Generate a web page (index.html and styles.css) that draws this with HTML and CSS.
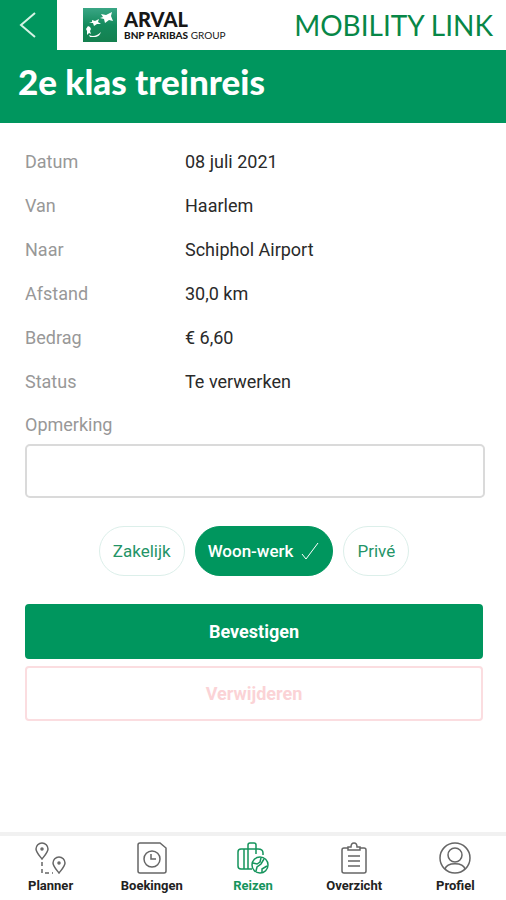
FILE: index.html
```html
<!DOCTYPE html>
<html lang="nl">
<head>
<meta charset="utf-8">
<meta name="viewport" content="width=device-width, initial-scale=1">
<title>Mobility Link</title>
<link rel="stylesheet" href="styles.css">
</head>
<body>
<header class="topbar">
  <button class="back" type="button" aria-label="Terug">
    <svg width="18" height="26" viewBox="0 0 18 26"><path d="M16 1 2 13l14 12"/></svg>
  </button>
  <div class="brand">
    <svg class="brand-mark" width="34" height="34" viewBox="0 0 34 34">
      <defs><linearGradient id="mark" x1="0" y1="0" x2="0" y2="1"><stop offset="0" stop-color="#3aa685"/><stop offset="0.5" stop-color="#148a5c"/><stop offset="1" stop-color="#14804f"/></linearGradient></defs>
      <rect width="34" height="34" fill="url(#mark)"/>
      <path fill="#fff" d="M18 6l5 1 6-3-1 4 2 5-4-1-4 3-1-4-4-1 3-1zM9 12l3 1 4-2-1 3 3 2-4 0-3 2-1-3-4 0 3-1zM5 18l2 1 1 2-1 2 1 3-2-1-2 2 0-4-1-2zM6 27c4 2 8 1 12-3-1 3-3 5-7 5l-4 0z"/>
    </svg>
    <div class="brand-text"><span class="brand-name">ARVAL</span><span class="brand-group"><b>BNP PARIBAS</b> GROUP</span></div>
  </div>
  <div class="product">MOBILITY LINK</div>
</header>
<h1 class="title">2e klas treinreis</h1>
<main class="content">
  <dl class="details">
    <dt>Datum</dt><dd>08 juli 2021</dd>
    <dt>Van</dt><dd>Haarlem</dd>
    <dt>Naar</dt><dd>Schiphol Airport</dd>
    <dt>Afstand</dt><dd>30,0 km</dd>
    <dt>Bedrag</dt><dd>€ 6,60</dd>
    <dt>Status</dt><dd>Te verwerken</dd>
  </dl>
  <label class="remark-label" for="remark">Opmerking</label>
  <input class="remark" id="remark" type="text">
  <div class="types">
    <button class="chip" type="button">Zakelijk</button>
    <button class="chip chip-active" type="button" aria-pressed="true">Woon-werk
      <svg width="20" height="20" viewBox="0 0 20 20"><path d="M2 13l4 5L18 2"/></svg>
    </button>
    <button class="chip" type="button">Privé</button>
  </div>
  <div class="actions">
    <button class="action confirm" type="button">Bevestigen</button>
    <button class="action remove" type="button">Verwijderen</button>
  </div>
</main>
<nav class="tabs">
  <a class="tab" href="#planner">
    <svg width="34" height="34" viewBox="0 0 34 34"><path d="M8 18C4 13 2 11 2 8a6 6 0 0 1 12 0c0 3-2 5-6 10zM25 32c-4-5-6-7-6-10a6 6 0 0 1 12 0c0 3-2 5-6 10z"/><circle cx="8" cy="8" r="1"/><circle cx="25" cy="22" r="1"/><path stroke-dasharray="4 3" d="M8 21v11h11"/></svg>
    <span>Planner</span></a>
  <a class="tab" href="#boekingen">
    <svg width="34" height="34" viewBox="0 0 34 34"><path d="M5 2h20l6 5v23q0 2-2 2H5q-2 0-2-2V4q0-2 2-2z"/><circle cx="17" cy="18" r="8"/><path d="M16 13v5h5"/></svg>
    <span>Boekingen</span></a>
  <a class="tab tab-active" href="#reizen" aria-current="page">
    <svg width="34" height="34" viewBox="0 0 34 34"><path d="M16 28H5q-3 0-3-3V11q0-3 3-3h17q5 0 5 4v2M8 8v20M12 28V4q0-2 2-2h4q2 0 2 2v4M20 8v5"/><circle cx="24" cy="24" r="8"/><path d="M17 22l4 1 3-2 1-4M20 30l1-4 4-3 3-5M26 31v-3l5-3"/></svg>
    <span>Reizen</span></a>
  <a class="tab" href="#overzicht">
    <svg width="34" height="34" viewBox="0 0 34 34"><path d="M11 7H7q-2 0-2 2v21q0 2 2 2h20q2 0 2-2V9q0-2-2-2h-4M11 9V6h3q0-4 3-4t3 4h3v3zM11 15h12M11 20h12M11 25h12"/></svg>
    <span>Overzicht</span></a>
  <a class="tab" href="#profiel">
    <svg width="34" height="34" viewBox="0 0 34 34"><circle cx="17" cy="17" r="15"/><circle cx="17" cy="14" r="7"/><path d="M7 28c2-7 18-7 20 0"/></svg>
    <span>Profiel</span></a>
</nav>
</body>
</html>
```
FILE: styles.css
```css
* { box-sizing: border-box; }
body {
  margin: 0;
  min-height: 100vh;
  display: flex;
  flex-direction: column;
  background: #fff;
  color: #2a2a2a;
  font: 18px/24px Roboto, "Liberation Sans", sans-serif;
}
button, input { font: inherit; }
svg { fill: none; stroke: currentColor; }
.topbar { display: flex; height: 50px; align-items: center; }
.back {
  width: 57px;
  height: 50px;
  padding: 0 2px 0 0;
  border: 0;
  display: grid;
  place-items: center;
  background: #00965e;
  color: #d5f3e5;
  stroke-width: 2;
}
.brand { display: flex; align-items: center; gap: 7px; margin-left: 26px; }
.brand-mark { stroke: none; }
.brand-text { display: flex; flex-direction: column; color: #171717; }
.brand-name { font: 900 20px/20px Lato, sans-serif; }
.brand-group { font: 10px/12px Lato, sans-serif; white-space: nowrap; }
.brand-group b { font-weight: 900; }
.product {
  margin-left: auto;
  padding-right: 13px;
  color: #078747;
  font: 28px/46px Lato, sans-serif;
  white-space: nowrap;
}
.title {
  margin: 0;
  padding: 11px 18px 22px;
  background: #00965e;
  color: #fff;
  font: 900 35px/40px Lato, sans-serif;
}
.content { flex: 1; padding: 27px 21px 0 25px; }
.details {
  margin: 0;
  display: grid;
  grid-template-columns: 160px 1fr;
  row-gap: 20px;
}
dt, .remark-label { color: #989898; }
dd { margin: 0; }
.remark-label { display: block; margin: 19px 0 7px; }
.remark {
  display: block;
  width: 100%;
  height: 54px;
  padding: 0 16px;
  border: 2px solid #dadada;
  border-radius: 5px;
  background: #fff;
}
.types { display: flex; justify-content: center; gap: 10px; margin: 28px 0; padding-right: 2px; }
.chip {
  display: flex;
  align-items: center;
  gap: 7px;
  height: 50px;
  padding: 0 13px;
  border: 1px solid #dcefea;
  border-radius: 25px;
  background: #fff;
  color: #249467;
  font-size: 17px;
}
.chip-active { padding: 0 12px; border-color: #00965e; background: #00965e; color: #fff; font-weight: 500; }
.actions { display: grid; gap: 7px; margin-right: 2px; }
.action { height: 55px; border: 2px solid #00965e; border-radius: 4px; font-weight: 700; }
.confirm { background: #00965e; color: #fff; }
.remove { border-color: #fbdde0; background: #fff; color: #fbd3d6; }
.tabs {
  display: grid;
  grid-template-columns: repeat(5, 1fr);
  height: 68px;
  border-top: 4px solid #f1f1f1;
}
.tab {
  display: flex;
  flex-direction: column;
  align-items: center;
  gap: 2px;
  padding-top: 5px;
  color: #666;
  font-size: 13px;
  font-weight: 700;
  line-height: 18px;
  text-decoration: none;
  stroke-width: 1.5;
}
.tab span { color: #222; }
.tab-active, .tab-active span { color: #15945c; }
```
